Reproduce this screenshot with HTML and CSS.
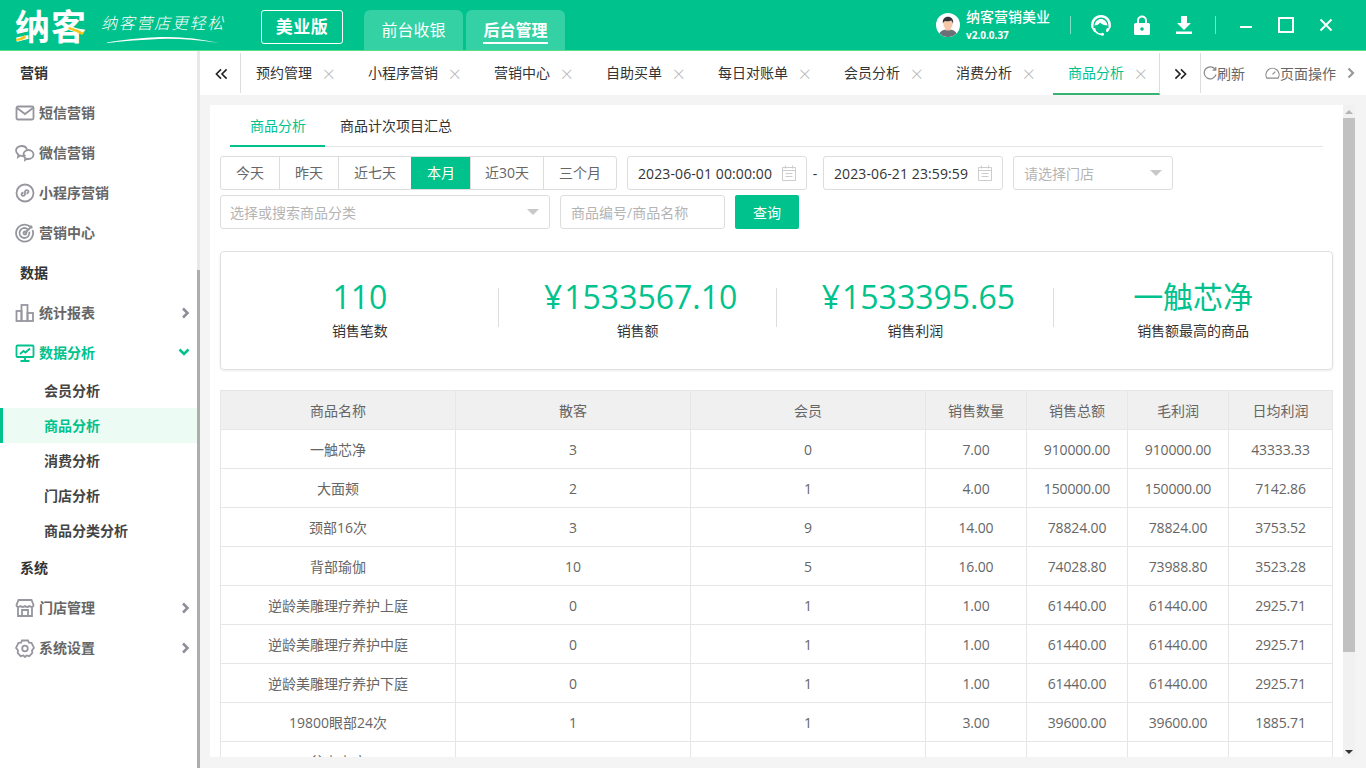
FILE: index.html
```html
<!DOCTYPE html>
<html lang="zh-CN">
<head>
  <meta charset="UTF-8" />
  <title>纳客营销美业</title>
  <link rel="stylesheet" href="styles.css">
</head>
<body>
  <div class="app">
    <header class="topbar">
      <div class="logo">
        <span class="logo-name">纳客</span>
        <svg class="logo-accent" viewBox="0 0 72 30" width="72" height="30">
          <path d="M1 27q5-1 9-4l1 3q-5 3-10 3z" fill="#f5c518"/>
          <path d="M54 15q8 2 15 6l-2 2q-7-4-14-6z" fill="#f5c518"/>
        </svg>
      </div>
      <div class="slogan">
        <span class="slogan-text">纳客营店更轻松</span>
        <svg class="slogan-swoosh" viewBox="0 0 116 8" width="116" height="8">
          <path d="M0 7Q30 2 58 1T116 7Q80 2 56 3T0 7z" fill="#fff"/>
        </svg>
      </div>
      <div class="edition">美业版</div>
      <nav class="top-nav">
        <a class="top-nav-item">前台收银</a>
        <a class="top-nav-item active"><span>后台管理</span></a>
      </nav>
      <div class="top-right">
        <svg class="avatar" viewBox="0 0 24 24" width="24" height="24">
          <circle cx="12" cy="12" r="12" fill="#fff"/>
          <path d="M3.500 20.500c1.500-3.500 5-4 8.500-4s7 .5 8.500 4a12 12 0 0 1-17 0z" fill="#6b6f78"/>
          <path d="M9.500 13h5v4.500h-5z" fill="#eebc9c"/>
          <ellipse cx="12" cy="11" rx="4.500" ry="5.500" fill="#f6c8a8"/>
          <path d="M7 11C6 6 9 3.800 12 3.800S18 6 17 11c-.5-2-1-3-2-3.500-2 1-4.500 1-6 .5-1 .5-1.500 1-2 2.500z" fill="#33343a"/>
        </svg>
        <div class="user-info">
          <div class="user-name">纳客营销美业</div>
          <div class="user-version">v2.0.0.37</div>
        </div>
        <i class="top-divider first"></i>
        <svg class="top-icon headset" viewBox="0 0 22 22" width="22" height="22">
          <path d="M11 1A10 10 0 0 0 1.500 14l2 .5V11a7.500 7.500 0 0 1 15 0v3.500l2-.5A10 10 0 0 0 11 1z" fill="#fff"/>
          <path d="M4.500 11.500C5 7.500 8 5 11 5s6 2.500 6.500 6.500c-3 0-6-1-7.500-3-1 2-3 3-5.500 3z" fill="#fff"/>
          <path d="M2 14h3.200l1 3.500-2 .5A10 10 0 0 1 2 14zM16.800 14H20a10 10 0 0 1-2.200 4l-2-.5z" fill="#fff"/>
          <path d="M5 17q3 3.500 7 3.500" fill="none" stroke="#fff" stroke-width="1.300"/>
          <circle cx="12.500" cy="20.300" r="1.500" fill="#fff"/>
        </svg>
        <svg class="top-icon lock" viewBox="0 0 16 20" width="16" height="20">
          <path d="M4 9V5.500a4 4 0 0 1 8 0V9" fill="none" stroke="#fff" stroke-width="2"/>
          <path d="M1.500 8h13a1.500 1.500 0 0 1 1.500 1.500v9a1.500 1.500 0 0 1-1.500 1.500h-13A1.500 1.500 0 0 1 0 18.500v-9A1.500 1.500 0 0 1 1.500 8z" fill="#fff"/>
          <circle cx="8" cy="14" r="1.800" fill="#00c28c"/>
        </svg>
        <svg class="top-icon download" viewBox="0 0 16 18" width="16" height="18">
          <path d="M5 0h6v7h4l-7 7-7-7h4z" fill="#fff"/>
          <path d="M0 15.500h16V18H0z" fill="#fff"/>
        </svg>
        <i class="top-divider second"></i>
        <svg class="win-btn min" viewBox="0 0 14 14" width="14" height="14"><path d="M1 9h12" stroke="#fff" stroke-width="2"/></svg>
        <svg class="win-btn max" viewBox="0 0 16 16" width="16" height="16"><rect x="1" y="1" width="14" height="14" fill="none" stroke="#fff" stroke-width="2"/></svg>
        <svg class="win-btn close" viewBox="0 0 14 14" width="14" height="14"><path d="M1.500 1.500l11 11M12.500 1.500l-11 11" stroke="#fff" stroke-width="2"/></svg>
      </div>
    </header>

    <div class="main-area">
      <aside class="sidebar">
        <div class="menu">
          <div class="menu-section">营销</div>
          <div class="menu-item">
            <svg class="menu-icon" viewBox="0 0 20 20"><rect x="1.500" y="3.500" width="17" height="13" rx="1.500"/><path d="M2 5l8 6 8-6"/></svg>
            <span>短信营销</span>
          </div>
          <div class="menu-item">
            <svg class="menu-icon" viewBox="0 0 20 20"><path d="M10.500 12c-1.500 1-4 1.200-5.500.5L3 14l.3-2.500C1.500 10 1 8.800 1 7.500 1 5 3.500 3 6.500 3c2.700 0 5 1.500 5.400 3.700"/><path d="M18.500 11.500c0 2.500-2.200 4.500-5 4.500-.5 0-1 0-1.500-.2l-2 1.200.2-2c-1-.8-1.700-2-1.700-3.500 0-2.500 2.200-4.500 5-4.500s5 2 5 4.500z"/></svg>
            <span>微信营销</span>
          </div>
          <div class="menu-item">
            <svg class="menu-icon" viewBox="0 0 20 20"><circle cx="10" cy="10" r="8.500"/><path d="M6.500 11.500c0 1.500 2.800 2 3.500 0V8.500c.5-2 3.500-1.500 3.500 0s-1.500 2-2 2M8.500 9.500c-1 .2-2 1-2 2"/></svg>
            <span>小程序营销</span>
          </div>
          <div class="menu-item">
            <svg class="menu-icon" viewBox="0 0 20 20"><path d="M15.500 4A8.500 8.500 0 1 0 17.500 7"/><path d="M12.800 6.300a5 5 0 1 0 1.500 2.500"/><circle cx="10" cy="10" r="1.500"/><path d="M10 10l7-7M15.500 2.500V4.500h2"/></svg>
            <span>营销中心</span>
          </div>
          <div class="menu-section">数据</div>
          <div class="menu-item">
            <svg class="menu-icon" viewBox="0 0 20 20"><rect x="1.500" y="8" width="5" height="10"/><rect x="6.500" y="2" width="6" height="16"/><rect x="12.500" y="10" width="5.500" height="8"/></svg>
            <span>统计报表</span>
            <svg class="menu-arrow" viewBox="0 0 8 12"><path d="M1.500 1.500L6 6l-4.500 4.500"/></svg>
          </div>
          <div class="menu-item open">
            <svg class="menu-icon" viewBox="0 0 20 20"><rect x="1.500" y="2.500" width="17" height="11.500" rx="1"/><path d="M10 14v4M5.500 18h9M5 11l3.500-3 2 1.500L15 5.500"/></svg>
            <span>数据分析</span>
            <svg class="menu-arrow" viewBox="0 0 12 8"><path d="M1.500 1.500L6 6l4.500-4.500"/></svg>
          </div>
          <div class="menu-sub">会员分析</div>
          <div class="menu-sub active">商品分析</div>
          <div class="menu-sub">消费分析</div>
          <div class="menu-sub">门店分析</div>
          <div class="menu-sub">商品分类分析</div>
          <div class="menu-section">系统</div>
          <div class="menu-item">
            <svg class="menu-icon" viewBox="0 0 20 20"><path d="M3 9v9h14V9"/><path d="M3.500 2h13l2 5c0 2.500-3.500 2.500-4 .5-.5 2-4 2-4.500 0-.5 2-4 2-4.500 0-.5 2-4 2-4-.5z"/><path d="M7 18v-6h6v6"/></svg>
            <span>门店管理</span>
            <svg class="menu-arrow" viewBox="0 0 8 12"><path d="M1.500 1.500L6 6l-4.500 4.500"/></svg>
          </div>
          <div class="menu-item">
            <svg class="menu-icon" viewBox="0 0 20 20"><path d="M7 2.500h6l1 2.200 2.500.2 2.500 5-2 2.500 .3 2.600-3 3.200-2.700-.7L10 19l-1.600-1.500-2.700.7-3-3.200.3-2.600-2-2.500 2.500-5 2.500-.2z"/><circle cx="10" cy="10.500" r="2.800"/></svg>
            <span>系统设置</span>
            <svg class="menu-arrow" viewBox="0 0 8 12"><path d="M1.500 1.500L6 6l-4.500 4.500"/></svg>
          </div>
        </div>
        <div class="side-scroll"><div class="side-thumb"></div></div>
      </aside>

      <main class="workspace">
        <div class="tabbar">
          <div class="tab-nav left">
            <svg viewBox="0 0 14 12" width="13" height="12"><path d="M6.500 1L1.500 6l5 5M12.500 1l-5 5 5 5"/></svg>
          </div>
          <div class="tab-list">
            <div class="tab">预约管理<i>×</i></div>
            <div class="tab">小程序营销<i>×</i></div>
            <div class="tab">营销中心<i>×</i></div>
            <div class="tab">自助买单<i>×</i></div>
            <div class="tab">每日对账单<i>×</i></div>
            <div class="tab">会员分析<i>×</i></div>
            <div class="tab">消费分析<i>×</i></div>
            <div class="tab active">商品分析<i>×</i></div>
          </div>
          <div class="tab-nav right">
            <svg viewBox="0 0 14 12" width="13" height="12"><path d="M1.500 1l5 5-5 5M7.500 1l5 5-5 5"/></svg>
          </div>
          <div class="tab-tools">
            <span class="tool">
              <svg viewBox="0 0 14 14" width="14" height="14"><path d="M12.500 4A6 6 0 1 0 13 8.500M12.800 1v3.200H9.600"/></svg>刷新
            </span>
            <span class="tool page-ops">
              <svg viewBox="0 0 16 14" width="15" height="14"><path d="M2 12.500A7 7 0 1 1 14 12.500zM8 8.500l3-3"/></svg>页面操作
            </span>
            <svg class="tool-more" viewBox="0 0 8 12" width="8" height="12"><path d="M1.500 1.500L6 6l-4.500 4.500"/></svg>
          </div>
        </div>

        <div class="page">
          <div class="panel">
            <div class="sub-tabs">
              <a class="sub-tab active">商品分析</a>
              <a class="sub-tab">商品计次项目汇总</a>
            </div>

            <div class="filter-row first">
              <div class="range-btns">
                <span class="range-btn">今天</span>
                <span class="range-btn">昨天</span>
                <span class="range-btn">近七天</span>
                <span class="range-btn active">本月</span>
                <span class="range-btn narrow">近30天</span>
                <span class="range-btn">三个月</span>
              </div>
              <div class="field date">
                <span>2023-06-01 00:00:00</span>
                <svg class="cal" viewBox="0 0 14 16" width="14" height="16"><path d="M.5 2.500h13v13H.5zM.5 5.500h13M3.500.5v3M10.500.5v3M3.500 8.500h7M3.500 11.500h7"/></svg>
              </div>
              <span class="date-sep">-</span>
              <div class="field date">
                <span>2023-06-21 23:59:59</span>
                <svg class="cal" viewBox="0 0 14 16" width="14" height="16"><path d="M.5 2.500h13v13H.5zM.5 5.500h13M3.500.5v3M10.500.5v3M3.500 8.500h7M3.500 11.500h7"/></svg>
              </div>
              <div class="field select store">
                <span class="placeholder">请选择门店</span>
                <i class="caret"></i>
              </div>
            </div>

            <div class="filter-row second">
              <div class="field select category">
                <span class="placeholder">选择或搜索商品分类</span>
                <i class="caret"></i>
              </div>
              <div class="field keyword">
                <span class="placeholder">商品编号/商品名称</span>
              </div>
              <button class="query-btn">查询</button>
            </div>

            <div class="stats">
              <div class="stat">
                <div class="stat-value">110</div>
                <div class="stat-label">销售笔数</div>
              </div>
              <div class="stat">
                <div class="stat-value"><span class="yen">¥</span>1533567.10</div>
                <div class="stat-label">销售额</div>
              </div>
              <div class="stat">
                <div class="stat-value"><span class="yen">¥</span>1533395.65</div>
                <div class="stat-label">销售利润</div>
              </div>
              <div class="stat">
                <div class="stat-value">一触芯净</div>
                <div class="stat-label">销售额最高的商品</div>
              </div>
            </div>

            <table class="data-table">
              <colgroup>
                <col class="col-wide"><col class="col-wide"><col class="col-wide">
                <col class="col-num"><col class="col-num"><col class="col-num"><col class="col-last">
              </colgroup>
              <thead>
                <tr><th>商品名称</th><th>散客</th><th>会员</th><th>销售数量</th><th>销售总额</th><th>毛利润</th><th>日均利润</th></tr>
              </thead>
              <tbody>
                <tr><td>一触芯净</td><td>3</td><td>0</td><td>7.00</td><td>910000.00</td><td>910000.00</td><td>43333.33</td></tr>
                <tr><td>大面颊</td><td>2</td><td>1</td><td>4.00</td><td>150000.00</td><td>150000.00</td><td>7142.86</td></tr>
                <tr><td>颈部16次</td><td>3</td><td>9</td><td>14.00</td><td>78824.00</td><td>78824.00</td><td>3753.52</td></tr>
                <tr><td>背部瑜伽</td><td>10</td><td>5</td><td>16.00</td><td>74028.80</td><td>73988.80</td><td>3523.28</td></tr>
                <tr><td>逆龄美雕理疗养护上庭</td><td>0</td><td>1</td><td>1.00</td><td>61440.00</td><td>61440.00</td><td>2925.71</td></tr>
                <tr><td>逆龄美雕理疗养护中庭</td><td>0</td><td>1</td><td>1.00</td><td>61440.00</td><td>61440.00</td><td>2925.71</td></tr>
                <tr><td>逆龄美雕理疗养护下庭</td><td>0</td><td>1</td><td>1.00</td><td>61440.00</td><td>61440.00</td><td>2925.71</td></tr>
                <tr><td>19800眼部24次</td><td>1</td><td>1</td><td>3.00</td><td>39600.00</td><td>39600.00</td><td>1885.71</td></tr>
                <tr><td>盆内水疗</td><td>1</td><td>0</td><td>1.00</td><td>30000.00</td><td>30000.00</td><td>1428.57</td></tr>
              </tbody>
            </table>
          </div>
          <div class="page-scroll">
            <i class="arrow-up"></i>
            <div class="page-thumb"></div>
            <i class="arrow-down"></i>
          </div>
        </div>
      </main>
    </div>
  </div>
</body>
</html>
```

FILE: styles.css
```css
* { box-sizing: border-box; }
html, body { height: 100%; }
body {
  margin: 0;
  overflow: hidden;
  font-family: "Open Sans", "Noto Sans CJK SC", sans-serif;
  font-size: 14px;
  color: #333;
  background: #fff;
}
i { font-style: normal; }

.app {
  display: flex;
  flex-direction: column;
  height: 768px;
}

/* top bar */
.topbar {
  display: flex;
  align-items: flex-start;
  flex: none;
  height: 51px;
  padding-left: 15px;
  background: #00c28c;
  border-bottom: 1px solid #5ddc8e;
  color: #fff;
}
.logo {
  position: relative;
  width: 72px;
  height: 30px;
  margin-top: 12px;
}
.logo-name {
  display: block;
  font-size: 35px;
  line-height: 30px;
  font-weight: 700;
  letter-spacing: 1px;
  white-space: nowrap;
}
.logo-accent { position: absolute; left: 0; top: 0; }
.slogan {
  display: flex;
  flex-direction: column;
  width: 124px;
  margin: 13px 0 0 14px;
}
.slogan-text {
  font-size: 16px;
  line-height: 20px;
  letter-spacing: 1.700px;
  font-style: italic;
  font-weight: 300;
  white-space: nowrap;
}
.slogan-swoosh { margin: 3px 0 0 2px; }
.edition {
  width: 82px;
  height: 34px;
  margin: 10px 0 0 36px;
  border: 1px solid #fff;
  border-radius: 3px;
  font-size: 17px;
  line-height: 32px;
  font-weight: 700;
  letter-spacing: 0.5px;
  text-align: center;
}
.top-nav {
  display: flex;
  gap: 3px;
  margin: 10px 0 0 21px;
}
.top-nav-item {
  width: 99px;
  height: 40px;
  background: #33d1a4;
  border-radius: 6px 6px 0 0;
  font-size: 16px;
  line-height: 40px;
  text-align: center;
}
.top-nav-item.active { font-weight: 700; }
.top-nav-item.active span {
  display: inline-block;
  height: 34px;
  line-height: 40px;
  border-bottom: 2px solid #fff;
}
.top-right {
  display: flex;
  align-items: center;
  height: 50px;
  margin-left: auto;
  padding-right: 33px;
}
.user-info { margin-left: 6px; width: 104px; }
.user-name { font-size: 14px; line-height: 18px; font-weight: 500; white-space: nowrap; }
.user-version { font-size: 10px; line-height: 14px; font-weight: 700; margin-top: 2px; }
.top-divider { width: 1px; height: 18px; background: #7fe0c5; }
.headset { margin-left: 19px; }
.lock { margin-left: 22px; }
.download { margin-left: 26px; }
.top-divider.second { margin-left: 23px; }
.win-btn.min { margin-left: 23px; }
.win-btn.max { margin-left: 25px; }
.win-btn.close { margin-left: 25px; }

/* main */
.main-area {
  display: flex;
  flex: 1;
  min-height: 0;
}

/* sidebar */
.sidebar {
  display: flex;
  flex: none;
  width: 200px;
  background: #fff;
}
.menu { flex: 1; padding-top: 2px; }
.menu-section {
  height: 40px;
  padding-left: 20px;
  font-size: 14px;
  line-height: 40px;
  font-weight: 700;
  color: #333;
}
.menu-item {
  display: flex;
  align-items: center;
  height: 40px;
  padding: 0 7px 0 15px;
  font-weight: 700;
  color: #666;
}
.menu-item span { margin-top: -2px; }
.menu-icon {
  width: 20px;
  height: 20px;
  margin-right: 4px;
  fill: none;
  stroke: #96969f;
  stroke-width: 1.800;
}
.menu-arrow {
  width: 9px;
  height: 12px;
  margin-left: auto;
  fill: none;
  stroke: #8f8f99;
  stroke-width: 2.600;
}
.menu-item.open { color: #00c28c; }
.menu-item.open .menu-icon { stroke: #00c28c; }
.menu-item.open .menu-arrow { width: 12px; height: 8px; margin-top: -3px; stroke: #00c28c; }
.menu-sub {
  height: 35px;
  padding-left: 44px;
  font-weight: 700;
  line-height: 35px;
  color: #444;
}
.menu-sub.active {
  padding-left: 41px;
  border-left: 3px solid #00c28c;
  background: #edfbf5;
  color: #00c28c;
}
.side-scroll {
  flex: none;
  width: 3px;
  background: #e8e8e8;
}
.side-thumb {
  height: 498px;
  margin-top: 219px;
  background: #adadad;
}

/* tabs */
.workspace {
  display: flex;
  flex: 1;
  flex-direction: column;
  min-width: 0;
}
.tabbar {
  display: flex;
  flex: none;
  align-items: stretch;
  height: 44px;
  padding-top: 2px;
  padding-left: 3px;
  background: #fff;
  font-size: 14px;
}
.tab-nav {
  display: flex;
  align-items: center;
  justify-content: center;
  height: 40px;
}
.tab-nav svg { margin-top: 2px; fill: none; stroke: #222; stroke-width: 1.700; }
.tab-nav.left { width: 38px; border-right: 1px solid #ddd; }
.tab-nav.right { width: 41px; border-right: 1px solid #ddd; }
.tab-list {
  display: flex;
  gap: 6px;
}
.tab {
  position: relative;
  display: flex;
  height: 42px;
  padding: 0 35px 0 15px;
  line-height: 40px;
  color: #333;
  white-space: nowrap;
}
.tab i {
  position: absolute;
  right: 12px;
  top: 0;
  font-size: 22px;
  font-weight: 300;
  line-height: 40px;
  color: #bbb;
}
.tab.active {
  color: #00c28c;
  border-bottom: 2px solid #35b373;
  border-right: 1px solid #ddd;
}
.tab-tools {
  display: flex;
  flex: 1;
  align-items: center;
  height: 40px;
  padding-left: 2px;
  font-size: 14px;
  color: #666;
}
.tool { display: flex; align-items: center; white-space: nowrap; }
.tool svg { fill: none; stroke: #888; stroke-width: 1.200; }
.page-ops { margin-left: 20px; }
.tool-more {
  margin-left: 11px;
  fill: none;
  stroke: #999;
  stroke-width: 2.200;
}

/* page */
.page {
  display: flex;
  flex: 1;
  min-height: 0;
  padding: 10px 11px 11px 10px;
  background: #f4f4f4;
}
.panel {
  flex: 1;
  min-width: 0;
  padding: 0 10px;
  overflow: hidden;
  background: #fff;
}
.page-scroll {
  display: flex;
  flex: none;
  flex-direction: column;
  align-items: center;
  width: 12px;
  background: #f1f1f1;
}
.arrow-up {
  flex: none;
  margin-top: 5px;
  border: 4px solid transparent;
  border-top: 0;
  border-bottom: 4px solid #b5b5b5;
}
.page-thumb {
  flex: none;
  width: 100%;
  height: 534px;
  margin-top: 4px;
  background: #c1c1c1;
}
.arrow-down {
  flex: none;
  margin-top: auto;
  margin-bottom: 3px;
  border: 4px solid transparent;
  border-bottom: 0;
  border-top: 4px solid #333;
}

.sub-tabs {
  display: flex;
  height: 42px;
  margin: 0 10px;
  border-bottom: 1px solid #e6e6e6;
}
.sub-tab {
  height: 42px;
  padding: 0 19px 0 20px;
  line-height: 42px;
  color: #333;
  white-space: nowrap;
}
.sub-tab.active {
  color: #00c28c;
  border-bottom: 2px solid #00c28c;
}
.sub-tab + .sub-tab { padding-left: 15px; }

.filter-row { display: flex; align-items: center; height: 34px; }
.filter-row.first { margin-top: 9px; }
.filter-row.second { margin-top: 5px; }

.range-btns {
  display: flex;
  height: 34px;
  border: 1px solid #ddd;
  border-radius: 3px;
  overflow: hidden;
  flex: none;
}
.range-btn {
  padding: 0 15px;
  line-height: 32px;
  color: #666;
  border-left: 1px solid #ddd;
  white-space: nowrap;
}
.range-btn:first-child { border-left: 0; }
.range-btn.narrow { padding: 0 14px; }
.range-btn.active {
  background: #00c28c;
  color: #fff;
  border-left-color: #00c28c;
}
.field {
  display: flex;
  align-items: center;
  flex: none;
  height: 34px;
  padding: 0 10px;
  border: 1px solid #ddd;
  border-radius: 3px;
  background: #fff;
  white-space: nowrap;
}
.date {
  justify-content: space-between;
  width: 180px;
  margin-left: 10px;
  letter-spacing: 0.1px;
  color: #333;
}
.date-sep { width: 16px; margin-right: -10px; text-align: center; color: #333; }
.cal { fill: none; stroke: #ccc; stroke-width: 1; }
.select { justify-content: space-between; }
.store { width: 160px; margin-left: 10px; }
.category { width: 330px; padding-left: 9px; }
.keyword { width: 165px; margin-left: 10px; }
.placeholder { color: #b4b4b4; }
.caret {
  flex: none;
  border: 6px solid transparent;
  border-bottom: 0;
  border-top: 6px solid #c8c8c8;
}
.query-btn {
  width: 64px;
  height: 34px;
  margin-left: 10px;
  padding: 0;
  border: 0;
  border-radius: 2px;
  background: #00c28c;
  font-family: inherit;
  font-size: 14px;
  color: #fff;
}

.stats {
  display: flex;
  align-items: flex-start;
  height: 119px;
  margin-top: 22px;
  padding-top: 22px;
  border: 1px solid #e0e0e0;
  border-radius: 4px;
  box-shadow: 0 1px 3px rgba(0, 0, 0, 0.08);
}
.stat {
  flex: 1;
  height: 80px;
  text-align: center;
}
.stat-value {
  height: 45px;
  font-size: 32px;
  line-height: 45px;
  color: #00c28c;
  white-space: nowrap;
}
.yen { margin: 0 2px 0 6px; }
.stat:last-child .stat-value { font-size: 30px; }
.stat-label {
  margin-top: 2px;
  line-height: 20px;
  color: #333;
}
.stat + .stat { position: relative; }
.stat + .stat::before {
  content: "";
  position: absolute;
  left: -1px;
  top: 14px;
  height: 39px;
  border-left: 1px solid #ddd;
}

.data-table {
  width: 1112px;
  margin-top: 20px;
  table-layout: fixed;
  border-collapse: collapse;
  color: #666;
  font-size: 14px;
}
.col-wide { width: 235px; }
.col-num { width: 101px; }
.col-last { width: 104px; }
.data-table th, .data-table td {
  height: 39px;
  padding: 0;
  border: 1px solid #e6e6e6;
  text-align: center;
  font-weight: 400;
  white-space: nowrap;
}
.data-table td:nth-child(n+4) { letter-spacing: -0.15px; }
.data-table th { background: #f0f0f0; }
```
